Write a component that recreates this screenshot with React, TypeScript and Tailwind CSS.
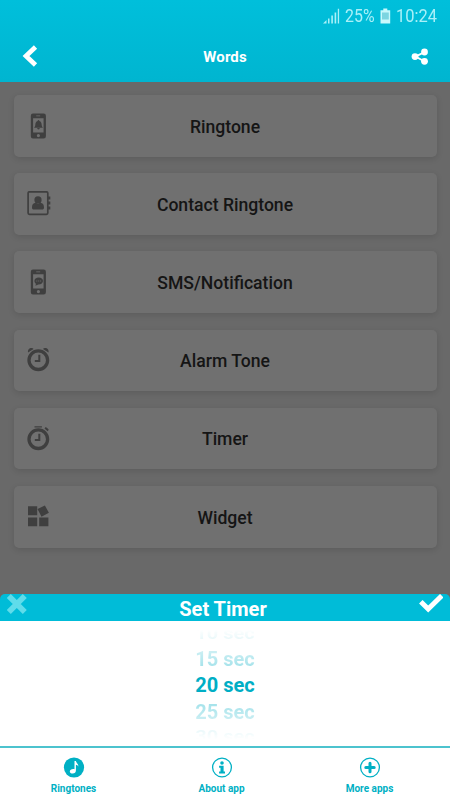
import type { ReactNode } from "react";

function PhoneFrame({ children }: { children: ReactNode }) {
  return (
    <>
      <path
        fillRule="evenodd"
        d="M8 .5h10.700a2.200 2.200 0 0 1 2.200 2.200v20.600a2.200 2.200 0 0 1-2.200 2.200H8a2.200 2.200 0 0 1-2.200-2.200V2.700A2.200 2.200 0 0 1 8 .5zM8.100 5.200v14.400h10.500V5.200zM11.200 2.400v.8h4v-.8zM13.400 21a1.600 1.600 0 1 0 0 3.200 1.600 1.600 0 0 0 0-3.200z"
      />
      {children}
    </>
  );
}

function RingtoneIcon() {
  return (
    <PhoneFrame>
      <path d="M13.500 7c.5 0 .9.400.9.900 1.600.5 2.200 1.800 2.300 4.100.1 1.300.5 1.900 1.200 2.700H9.100c.7-.8 1.100-1.400 1.200-2.700.1-2.300.7-3.600 2.300-4.100 0-.5.400-.9.9-.9zM12.200 15h2.600a1.300 1.400 0 0 1-2.600 0z" />
    </PhoneFrame>
  );
}

function ContactIcon() {
  return (
    <>
      <rect x="3.100" y=".8" width="19.700" height="22.600" rx="1.300" fill="none" stroke="currentColor" strokeWidth="1.700" />
      <circle cx="13" cy="8.900" r="3.600" />
      <path d="M7 16.500c0-3 1.300-4.500 3.600-4.700 1.500 1.100 3.300 1.100 4.800 0 2.300.2 3.600 1.700 3.600 4.700 0 1.400-.7 2.100-1.700 2.100H8.700c-1 0-1.700-.7-1.700-2.100z" />
      <path d="M23 5.600h2.300v2.900H23zM23 10.600h2.300v2.900H23zM23 15.600h2.300v2.900H23z" />
    </>
  );
}

function SmsIcon() {
  return (
    <PhoneFrame>
      <path
        fillRule="evenodd"
        d="M13.700 8.600c2.500 0 4.300 1.400 4.300 3.400s-1.800 3.400-4.300 3.400h-.5c-.8.7-1.800 1.100-3 1.100.5-.5.700-1 .7-1.700-.9-.6-1.500-1.600-1.500-2.800 0-2 1.800-3.400 4.300-3.400zM11.400 11.600v.9h.9v-.9zm1.900 0v.9h.9v-.9zm1.900 0v.9h.9v-.9z"
      />
    </PhoneFrame>
  );
}

function ClockFace() {
  return (
    <g fill="none" stroke="currentColor">
      <circle cx="13.300" cy="13.200" r="9.300" strokeWidth="3.300" />
      <path d="M14.300 7.700v6.200H9.800" strokeWidth="2" />
    </g>
  );
}

function AlarmIcon() {
  return (
    <>
      <ClockFace />
      <path d="M3.100 5.600C2.500 2.800 4.300.8 6.600.9c.9 0 1.600.4 2 1.200zM23.500 5.600c.6-2.800-1.200-4.800-3.500-4.700-.9 0-1.600.4-2 1.200z" />
    </>
  );
}

function TimerIcon() {
  return (
    <>
      <ClockFace />
      <path d="M9.500.2h7.400v1.400H9.500zM19.500 2.400l1.200-1.300c1.300.6 2.300 1.500 3.100 2.700l-1.200 1.400z" />
    </>
  );
}

function WidgetIcon() {
  return (
    <path d="M3 2.200h9.200v9.100H3zM3 13.400h9.200v8.900H3zM14.200 13.400h9.200v8.900h-9.200zM12.500 5.100l7.400-3.600 4 7.300-7.400 4z" />
  );
}

const options = [
  { label: "Ringtone", Icon: RingtoneIcon },
  { label: "Contact Ringtone", Icon: ContactIcon },
  { label: "SMS/Notification", Icon: SmsIcon },
  { label: "Alarm Tone", Icon: AlarmIcon },
  { label: "Timer", Icon: TimerIcon },
  { label: "Widget", Icon: WidgetIcon },
];

function StatusBar() {
  return (
    <div className="flex h-[31px] items-center justify-end pr-[12px] text-[18.500px] leading-none text-[#a9f0f8]">
      <svg width="17" height="16" viewBox="0 0 17 16" fill="currentColor" className="mr-[5px]">
        <path d="M0 15.500L3.500 12v3.500zM5 10.500h1.500v5H5zM8.300 7.500h1.600v8H8.300zM11.600 4.500h1.600v11h-1.600zM14.800.8h1.300v14.700h-1.300z" />
      </svg>
      <span className="w-[30px] pt-[2px]">
        <span className="inline-block origin-left scale-x-[0.86]">25%</span>
      </span>
      <svg width="11" height="16" viewBox="0 0 11 16" className="mr-[5px] ml-[5px]">
        <path d="M3.300.5h4v1.800h2.900v13.200H.5V2.300h2.800z" fill="#c8f8fc" />
        <path d="M2 4.500h6.800v7H2z" fill="#7cd5e1" />
      </svg>
      <span className="w-[42px] pt-[2px]">
        <span className="inline-block origin-left scale-x-[0.89]">10:24</span>
      </span>
    </div>
  );
}

function Header() {
  return (
    <header className="h-[82px] bg-linear-to-b from-[#00bfdb] to-[#00b5d0] text-white">
      <StatusBar />
      <div className="flex h-[51px] items-center justify-between pr-[21px] pl-[22px]">
        <svg width="17" height="24" viewBox="0 0 17 24" className="mb-[2px]">
          <path d="M13.500 3L4 12l9.500 9" fill="none" stroke="currentColor" strokeWidth="4.700" />
        </svg>
        <h1 className="pt-[2px] text-[15px] font-bold tracking-[0.1px]">Words</h1>
        <svg width="18" height="18" viewBox="0 0 18 18" fill="currentColor">
          <path d="M13.700 4L4.500 8.600l9.200 4.900" fill="none" stroke="currentColor" strokeWidth="1.900" />
          <circle cx="4" cy="8.600" r="3.400" />
          <circle cx="13.500" cy="4" r="3.400" />
          <circle cx="13.500" cy="13.300" r="3.400" />
        </svg>
      </div>
    </header>
  );
}

function TimerSheet() {
  return (
    <section className="flex flex-1 flex-col">
      <div className="grid h-[27px] grid-cols-[24px_1fr_24px] items-start rounded-t-[5px] bg-[#00bcd8] pr-[7px] pl-[7px] text-center text-white">
        <svg width="24" height="20" viewBox="0 0 24 20" className="text-[#60dcea]">
          <path d="M3.800 4l12 12M15.800 4l-12 12" fill="none" stroke="currentColor" strokeWidth="5.600" strokeLinecap="square" />
        </svg>
        <h2 className="pr-[4px] text-[20px] leading-[30px] font-bold">Set Timer</h2>
        <svg width="24" height="20" viewBox="0 0 24 20">
          <path d="M3.600 9.500l5.600 5.500L21 3.500" fill="none" stroke="currentColor" strokeWidth="5" strokeLinecap="square" />
        </svg>
      </div>
      <div className="flex h-[125px] flex-col items-center bg-white text-[20px] leading-[26.700px] font-bold text-[#00aec5]">
        <div className="scale-y-[0.8] bg-linear-to-b from-[#00aec5]/0 from-30% to-[#00aec5]/12 bg-clip-text leading-[24.500px] text-transparent">10 sec</div>
        <div className="bg-linear-to-b from-[#00aec5]/15 to-[#00aec5]/40 bg-clip-text text-transparent">15 sec</div>
        <div>20 sec</div>
        <div className="bg-linear-to-b from-[#00aec5]/40 to-[#00aec5]/15 bg-clip-text text-transparent">25 sec</div>
        <div className="scale-y-[0.8] bg-linear-to-b from-[#00aec5]/10 to-[#00aec5]/0 to-70% bg-clip-text leading-[20px] text-transparent">30 sec</div>
      </div>
    </section>
  );
}

function BottomNav() {
  return (
    <nav className="flex h-[54px] justify-between border-t-2 border-[#4cc3ce] bg-white pr-[53px] pl-[46px] text-[10px] font-bold text-[#00b0c4]">
      <div className="flex w-[55px] flex-col items-center pt-[9px]">
        <svg width="22" height="22" viewBox="0 0 22 22">
          <circle cx="11" cy="10.500" r="10.100" fill="currentColor" />
          <path d="M11.500 4h1.400c.1 2.100 2.700 2.700 2.400 5.400-.5-1.100-1.300-1.600-2.400-1.700v5.900c0 1.900-1.300 3-3.200 3-1.800 0-2.900-.9-2.900-2.100 0-1.700 2.100-2.800 4.700-2.300z" fill="#fff" />
        </svg>
        <span className="mt-[3px] leading-[14px] whitespace-nowrap">Ringtones</span>
      </div>
      <div className="flex w-[55px] flex-col items-center pt-[9px]">
        <svg width="22" height="22" viewBox="0 0 22 22" fill="currentColor">
          <circle cx="11" cy="10.500" r="9.400" fill="none" stroke="currentColor" strokeWidth="1.300" />
          <circle cx="11" cy="6" r="1.800" />
          <path d="M8.100 8.800h4.500v5.700H14v1.900H8.100v-1.900h1.400v-3.800H8.100z" />
        </svg>
        <span className="mt-[3px] leading-[14px] whitespace-nowrap">About app</span>
      </div>
      <div className="flex w-[55px] flex-col items-center pt-[9px]">
        <svg width="22" height="22" viewBox="0 0 22 22">
          <circle cx="11" cy="10.500" r="9.400" fill="none" stroke="currentColor" strokeWidth="1.300" />
          <path d="M11 6.300v8.400M6.800 10.500h8.400" stroke="currentColor" strokeWidth="3" strokeLinecap="round" />
        </svg>
        <span className="mt-[3px] leading-[14px] whitespace-nowrap">More apps</span>
      </div>
    </nav>
  );
}

export default function App() {
  return (
    <div className="flex h-[800px] w-[450px] flex-col overflow-hidden bg-[#696969] font-['Roboto',sans-serif]">
      <Header />
      <main className="flex h-[512px] flex-col gap-[16.600px] pt-[13px] pr-[13px] pl-[14px]">
        {options.map(({ label, Icon }) => (
          <button
            key={label}
            className="grid h-[61.600px] shrink-0 grid-cols-[26px_1fr_26px] items-center rounded-[5px] bg-[#707070] px-[11px] shadow-[0_2px_6px_rgba(0,0,0,0.12)]"
          >
            <svg width="26" height="26" viewBox="0 0 26 26" fill="currentColor" className="text-[#3f3f3f]">
              <Icon />
            </svg>
            <span className="pt-[2px] pr-px text-[17.600px] font-medium text-[#151515]">{label}</span>
          </button>
        ))}
      </main>
      <TimerSheet />
      <BottomNav />
    </div>
  );
}
